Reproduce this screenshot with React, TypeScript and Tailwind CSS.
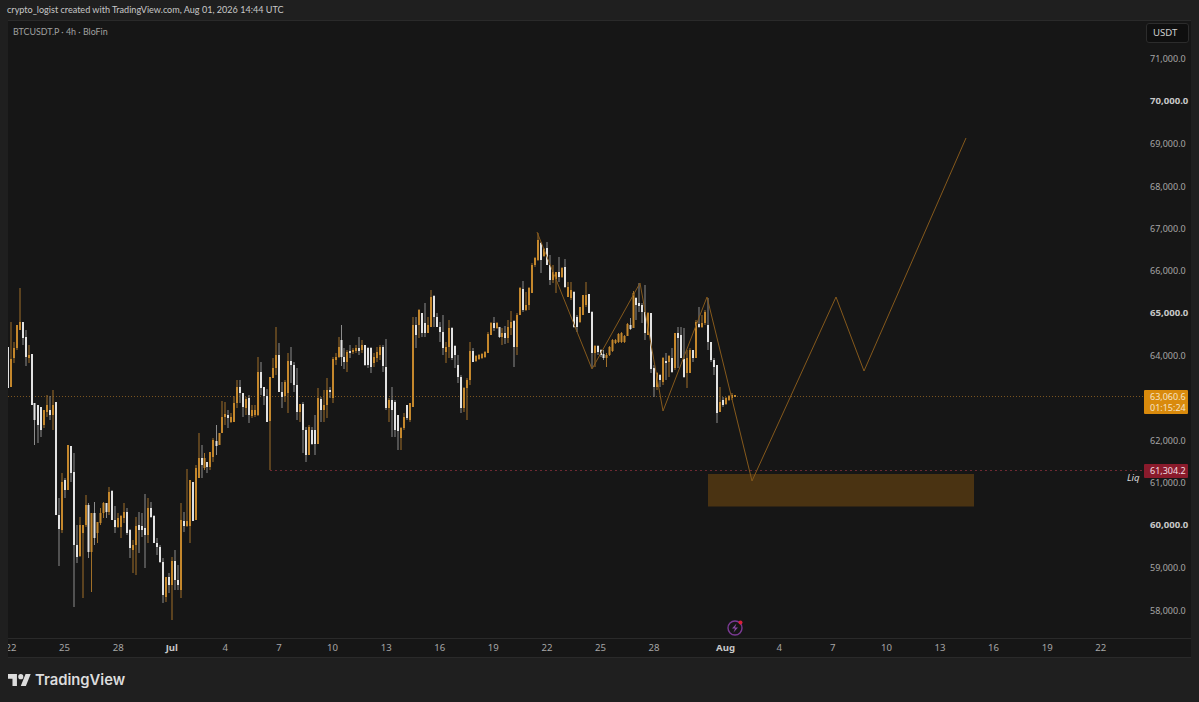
const W = 0, O = 1;
type C = [number, number, number, number, number, number];
const candles: C[] = [
[8,347,388,347,388,W],[11,322,387,359,387,O],[14,342,363,348,358,O],[17,325,350,325,348,O],[20,288,330,322,330,O],[23,322,345,322,338,W],[26,330,366,337,357,W],[29,345,363,355,358,O],[32,354,405,354,405,W],[34.5,403,445,403,420,W],[38,405,443,405,425,W],[41,407,437,407,430,W],[44,410,428,410,425,O],[47,395,417,405,412,O],[50,396,420,410,415,W],[53,390,430,405,415,O],[56,402,515,402,515,W],
[59,498,566,515,529,W],[62,473,533,482,530,O],[65,478,498,480,490,W],[68,445,490,445,490,O],[71,446,482,446,473,W],[74,453,607,472,545,W],[77,525,563,545,557,W],[80,517,557,525,556,O],[83,525,598,525,533,O],[86,495,527,505,525,O],[88.5,503,558,505,552,W],[91.5,513,592,513,552,O],[94.5,502,545,513,538,W],[97.5,522,543,522,533,O],[100.5,508,525,513,523,O],[103.5,502,518,503,513,O],[106.5,503,518,503,512,W],[109,487,515,492,512,O],[112,490,520,491,520,W],[115,506,533,520,527,W],[118,513,528,518,527,O],[121,515,538,516,527,O],[124,503,523,512,518,O],[127,508,535,512,533,W],[130,529,558,530,548,W],[133,540,573,545,550,O],[136,517,575,526,545,O],[139,512,553,525,530,W],[142,513,537,526,530,W],[145,494,568,528,535,W],[148,498,543,508,535,O],[151,502,518,508,517,W],[154,515,543,516,543,W],[157,538,555,543,547,W],[160,545,563,547,562,W],[163,558,603,562,595,W],[166,577,602,577,597,O],[169,573,593,577,585,W],[172,557,620,561,585,O],[175,550,590,561,580,W],[178,565,590,580,585,W],[181,503,598,520,590,O],[184,512,532,521,526,W],[187,469,527,521,526,O],[190,480,543,480,526,O],[193,482,521,482,521,W],[196,465,520,468,520,O],[199,433,478,458,478,O],
[202,445,478,458,465,W],[204.5,453,470,458,468,O],[207,462,473,462,467,W],[210,452,470,452,467,O],[213,438,462,440,457,O],[216.5,425,455,441,446,W],[219.5,433,445,433,445,O],[222,401,433,417,433,O],[225,402,425,414,417,O],[228,410,428,415,418,W],[231,413,423,417,422,O],[234,396,422,403,422,O],[237,380,408,387,403,O],[240,380,403,387,393,W],[243,393,417,393,407,W],[246,397,415,399,408,O],[249,395,423,398,415,W],[252,405,418,410,416,O],[255,405,417,410,415,O],[258,357,416,372,415,O],[261,362,395,372,388,W],[264,387,405,387,396,W],[267,389,422,396,422,W],[270,377,470,377,421,O],[273,358,378,368,378,O],[276,327,375,355,368,O],[279,343,392,355,392,W],[282,382,408,392,397,W],[285,380,402,382,396,O],[288,353,413,361,393,O],[291,347,383,361,365,W],[294,362,392,365,385,W],[297,368,420,385,412,W],[300,404,422,404,412,O],[303,402,453,404,430,W],[306,427,462,430,455,W],[309,425,455,427,455,O],[312,427,445,430,444,W],[315,415,455,430,444,W],[318,388,444,398,444,O],[321,397,422,399,410,W],[324,390,422,405,410,O],[327,378,418,390,405,O],[330,387,398,390,392,W],[333,357,403,359,398,O],[336,353,365,357,360,O],[339,337,358,347,357,O],[341.5,325,366,340,357,W],[344,348,369,357,362,W],[347,350,372,352,362,O],[350,345,358,351,353,W],[353,348,354,350,352,O],[356,345,353,348,351,O],[359,337,355,348,351,W],[362,340,353,345,350,O],[365,345,366,345,365,W],[368,347,368,348,365,W],[371,347,373,348,367,W],[374,353,367,357,363,O],[377,347,362,352,358,O],[380,345,360,347,355,O],[383,345,372,347,366,W],[386,339,410,367,408,W],[389,398,422,400,408,O],[392,387,437,400,410,W],[395,400,437,402,430,W],[398,415,450,415,431,W],
[401,427,450,428,438,O],[404,413,430,417,428,O],[407,405,420,405,418,W],[410,403,422,403,420,O],[413,317,407,325,407,O],[416,317,348,325,335,W],[419,309,338,310,325,O],[422,313,337,313,333,W],[425,303,337,323,333,W],[428,317,333,325,333,O],[431,290,327,297,327,O],[434,295,327,296,317,W],[437,313,327,317,327,W],[440,322,342,327,332,W],[443,315,355,332,348,W],[446,342,363,347,352,O],[449,320,358,328,347,O],[452,327,360,328,358,W],[455,345,368,346,355,W],[458,355,383,365,377,W],[461,375,413,377,408,W],[464,387,412,388,408,O],[467,378,420,380,388,O],[470,342,385,351,380,O],[473,348,362,351,362,W],[476,355,362,356,361,O],[479,354,360,355,359,O],[482,353,359,354,358,O],[485,351,358,352,357,O],[488,332,353,334,353,O],[491,322,335,323,335,O],[494,317,331,323,328,W],[497,322,329,323,328,O],[499.5,327,338,327,337,W],[502,328,345,333,337,O],[505,326,344,333,338,W],[508,320,343,327,338,O],[511,311,335,322,328,O],[514,320,367,321,347,W],[517,313,355,315,347,O],[520,287,315,288,315,O],[523,281,312,289,310,W],[526,292,311,305,310,O],[529,287,310,288,305,O],[532,263,293,265,293,O],[535,257,267,258,265,O],[538,233,261,240,260,O],[541,242,273,243,260,W],[544,248,257,249,256,O],[547,242,265,248,265,W],[550,255,285,265,280,W],[553,265,283,272,280,O],[556,272,293,272,279,O],[559,257,282,272,277,W],[562,267,278,268,277,O],[565,259,288,267,287,W],[568,282,297,287,297,O],[571,282,300,290,298,O],[574,291,328,292,327,W],[577,315,332,317,327,W],[580,307,323,307,322,O],[583,295,315,295,315,O],[586,282,307,295,305,O],[589,294,313,294,313,W],[592,311,368,312,353,W],
[595,345,367,346,353,O],[598,345,355,346,352,W],[601,349,357,350,355,W],[603.5,350,360,354,358,W],[606.5,353,367,355,358,O],[609.5,346,356,347,355,O],[612.5,339,352,340,351,O],[615.5,339,344,340,343,O],[618.5,333,343,334,342,O],[621.5,332,343,333,342,O],[624.5,335,343,336,342,O],[627.5,323,336,324,336,O],[630.5,318,330,325,329,W],[633.5,291,328,293,328,O],[636,297,320,298,305,W],[639,283,312,303,306,W],[642,303,323,305,312,W],[645,285,340,312,333,W],[648,312,335,313,335,O],[651,313,373,313,369,W],[654,365,397,368,387,W],[657,372,390,373,387,O],[660,374,387,375,380,W],[663,357,385,358,382,O],[666,353,380,361,363,W],[669,355,377,356,362,O],[672,348,373,358,372,W],[675,333,370,333,368,O],[678,327,368,333,338,W],[681,327,358,335,358,W],[684,328,378,359,377,W],[687,350,388,358,373,O],[690,348,373,350,373,O],[693,350,362,350,358,W],[696,320,358,322,358,O],[699,307,328,324,327,W],[702,315,328,323,327,O],[705,310,325,312,323,O],[708,298,350,325,342,W],[711,342,362,342,360,W],[714,358,375,360,367,W],[717,365,423,365,413,W],[720,387,412,402,412,O],[723,397,407,400,405,W],[726,397,405,398,404,O],[729,395,401,396,400,O],[732,393,400,395,398,O],[735,395,397,395,397,O],
];

const prices: [string, boolean][] = [["71,000.0",false],["70,000.0",true],["69,000.0",false],["68,000.0",false],["67,000.0",false],["66,000.0",false],["65,000.0",true],["64,000.0",false],["",false],["62,000.0",false],["61,000.0",false],["60,000.0",true],["59,000.0",false],["58,000.0",false]];
const times = ["22","25","28","Jul","4","7","10","13","16","19","22","25","28","Aug","4","7","10","13","16","19","22"];
const lato = { fontFamily: "Lato, sans-serif" };

export default function App() {
  return (
    <div className="flex h-[702px] w-[1199px] flex-col overflow-hidden bg-[#1f1f1f] text-[9.6px] text-[#c4c4c4]" style={{ fontFamily: '"Noto Sans", sans-serif' }}>
      <div className="flex h-[20px] shrink-0 items-center pl-[7px] text-[9.07px] text-[#c8c8c8]" style={lato}>crypto_logist created with TradingView.com, Aug 01, 2026 14:44 UTC</div>
      <div className="relative mx-[8px] flex h-[638px] w-[1183px] shrink-0 flex-col border-t border-[#2a2a2a] bg-[#161616]">
        <div className="relative flex min-h-0 flex-1">
          <div className="relative flex-1 pl-[5px] pt-[4px] text-[8.9px] text-[#a0a0a0]" style={lato}>
            BTCUSDT.P · 4h · BloFin
          </div>
          <div className="flex w-[48px] shrink-0 flex-col items-end pr-[2px]">
            <div className="mt-[2px] flex h-[20px] w-[43px] shrink-0 items-center rounded-[3px] border border-[#2c2c2c] bg-[#0f0f0f] pl-[6px] text-[#d0d0d0]">USDT</div>
            <div className="-mt-[5px] flex w-full shrink-0 flex-col">
              {prices.map((p, i) => (
                <div key={i} className={`flex h-[42.4px] shrink-0 items-center pl-[7px] ${p[1] ? "text-[9.6px] font-bold text-[#c8c8c8]" : "text-[9px] text-[#a6a6a6]"}`}>{p[0]}</div>
              ))}
            </div>
          </div>
          <svg className="pointer-events-none absolute left-0 top-0" width="1135" height="617" viewBox="8 21 1135 617">
            <line x1="8" y1="396.5" x2="1143" y2="396.5" stroke="#7a5420" strokeWidth="1" strokeDasharray="1 2" />
            <line x1="270" y1="470.5" x2="1143" y2="470.5" stroke="#6e2a33" strokeWidth="1" strokeDasharray="2 3" />
            <rect x="708" y="474" width="266" height="32.5" fill="#4a3312" />
            {candles.map((c, i) => (
              <g key={i}>
                <rect x={c[0] - 0.5} y={c[1]} width="1" height={Math.max(c[2] - c[1], 1)} fill={c[5] === O ? "#a06f28" : "#8c8c8c"} />
                <rect x={c[0] - 1} y={c[3]} width="2" height={Math.max(c[4] - c[3], 1)} fill={c[5] === O ? "#c4872c" : "#e2e2e2"} />
              </g>
            ))}
            <polyline points="537,232 592,369 640,283 663,411 707,297 752,481 836,297 864,371 966,138" fill="none" stroke="#85591c" strokeWidth="1" />
            <circle cx="735" cy="628" r="7" fill="none" stroke="#7b3a94" strokeWidth="1.4" />
            <path d="M736.5 623.5 L732 628.5 H735 L733.5 632.5 L738 627.5 H735 Z" fill="#8a4aa6" />
            <circle cx="740.5" cy="622.5" r="2" fill="#d8203a" />
          </svg>
          <div className="absolute right-[3px] top-[369px] flex h-[24px] w-[44px] flex-col justify-center rounded-[1px] bg-[#d98a0c] pl-[6px] text-[9px] leading-[11.5px] text-[#f6e3c4]">
            <span>63,060.6</span>
            <span>01:15:24</span>
          </div>
          <div className="absolute right-[3px] top-[443px] flex h-[14px] w-[44px] items-center rounded-[1px] bg-[#8a1b2c] pl-[6px] text-[9px] text-[#f2dfe2]">61,304.2</div>
          <div className="absolute left-[1119px] top-[450px] text-[9.6px] italic text-[#d8d8d8]">Liq</div>
        </div>
        <div className="flex h-[20px] shrink-0 items-center overflow-hidden border-y border-[#2a2a2a] pl-[3px] text-[#a6a6a6]">
          <div className="flex -translate-x-[26.8px]">
            {times.map((t, i) => (
              <div key={i} className={`flex w-[53.6px] shrink-0 justify-center ${t === "Aug" ? "ml-[17.9px]" : ""} ${t === "Jul" || t === "Aug" ? "font-bold text-[#c8c8c8]" : ""}`}>{t}</div>
            ))}
          </div>
        </div>
      </div>
      <div className="flex flex-1 items-center gap-[4px] pl-[8px] text-[#dcdcdc]">
        <svg width="23" height="12" viewBox="0 4 36 18" fill="#dcdcdc" preserveAspectRatio="none">
          <path d="M14 22H7V11H0V4h14v18zM28 22h-8l7.5-18h8L28 22z" />
          <circle cx="20" cy="8" r="4" />
        </svg>
        <span className="text-[14.8px] font-semibold leading-none" style={{ fontFamily: "Inter, sans-serif" }}>TradingView</span>
      </div>
    </div>
  );
}
